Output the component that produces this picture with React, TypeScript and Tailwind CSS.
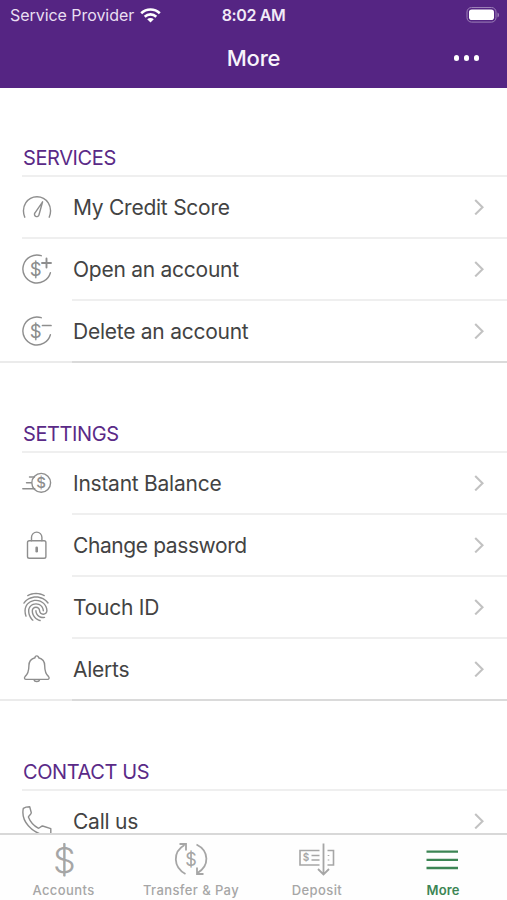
import type { ReactNode } from "react";
import { MdFingerprint } from "react-icons/md";

type Item = { label: string; icon: ReactNode; inset?: boolean; tracking?: string };
type Section = { title: string; items: Item[] };

function Dollar({ x, y, size, weight = 400 }: { x: number; y: number; size: number; weight?: number }) {
  return (
    <text x={x} y={y} fontSize={size} fontWeight={weight} textAnchor="middle" fill="currentColor" stroke="none">
      $
    </text>
  );
}

function Icon({ children }: { children: ReactNode }) {
  return (
    <svg
      className="h-[30px] w-[30px] shrink-0 text-[#8e8e8e]"
      viewBox="0 0 30 30"
      fill="none"
      stroke="currentColor"
      strokeWidth={1.4}
      strokeLinecap="round"
      strokeLinejoin="round"
    >
      {children}
    </svg>
  );
}

const GaugeIcon = (
  <Icon>
    <path d="M2.8 25.200C-1.500 14.500 5.500 4.700 15 4.700S31.500 14.500 27.200 25.200" />
    <path d="M20.600 9.800 13 20.800a2.300 2.300 0 1 0 4 2Z" />
  </Icon>
);

const OpenIcon = (
  <Icon>
    <path d="M19.200 1.700A14 14 0 1 0 28.400 18.700" />
    <path d="M24.500 4.500v9M20 9h9" strokeWidth={1.9} />
    <Dollar x={13.800} y={22} size={18.500} />
    <path d="M13.800 7.500v16.500" strokeWidth={1} />
  </Icon>
);

const DeleteIcon = (
  <Icon>
    <path d="M19.200 1.700A14 14 0 1 0 28.400 18.700" />
    <path d="M20.500 9.500h8.500" strokeWidth={1.700} />
    <Dollar x={13.800} y={22} size={18.500} />
    <path d="M13.800 7.500v16.500" strokeWidth={1} />
  </Icon>
);

const BalanceIcon = (
  <Icon>
    <circle cx="19.200" cy="14.800" r="9.400" />
    <Dollar x={19.200} y={20.200} size={15} weight={500} />
    <path d="M7.500 9h5M4.500 14.800h4.800M.8 20.800h12" />
  </Icon>
);

const LockIcon = (
  <Icon>
    <rect x="5.500" y="10.700" width="18.400" height="17.600" rx="1.800" />
    <path d="M9.500 10.700V7.300a5.200 5.200 0 0 1 10.400 0v3.400" />
    <path d="M14.700 17.700v3.600" strokeWidth={2.600} />
  </Icon>
);

const BellIcon = (
  <Icon>
    <path d="M13 3.700a1.800 1.800 0 0 1 3.600 0c4 1 6.100 3.800 6.100 8.100 0 6.500 1.200 8.600 3.900 10.800 1 1.100.4 2.800-1 2.800H4c-1.400 0-2-1.700-1-2.800 2.700-2.200 3.900-4.300 3.900-10.800 0-4.300 2.100-7.100 6.100-8.100Z" />
    <path d="M12 25.600c.5 2.600 5.100 2.600 5.600 0" />
  </Icon>
);

const PhoneIcon = (
  <Icon>
    <path d="M1.300 2.300C3 1.200 5.500.8 7.700.8L9.300 6.800C9.200 8.300 6.900 9.300 6.400 11c2 5.300 5.200 8.600 9.800 11.200 1.900-.1 2.700-2 4.400-2.200l8.200 2.700v5.500c-2 1-5 1.300-8 .4C11 26.500-1.500 16 1.300 2.300Z" />
  </Icon>
);

const TouchIcon = (
  <span className="flex size-[30px] shrink-0 items-center justify-center pr-0.5">
    <MdFingerprint className="size-[34px] shrink-0 text-[#8e8e8e]" />
  </span>
);

const SECTIONS: Section[] = [
  {
    title: "SERVICES",
    items: [
      { label: "My Credit Score", icon: GaugeIcon },
      { label: "Open an account", icon: OpenIcon, inset: true },
      { label: "Delete an account", icon: DeleteIcon },
    ],
  },
  {
    title: "SETTINGS",
    items: [
      { label: "Instant Balance", icon: BalanceIcon, inset: true },
      { label: "Change password", icon: LockIcon, inset: true, tracking: "tracking-[-0.4px]" },
      { label: "Touch ID", icon: TouchIcon, inset: true },
      { label: "Alerts", icon: BellIcon },
    ],
  },
  {
    title: "CONTACT US",
    items: [{ label: "Call us", icon: PhoneIcon }],
  },
];

function Chevron() {
  return (
    <svg className="mr-[22px] h-4 w-3" viewBox="0 0 12 16" fill="none" stroke="#c2c2c2" strokeWidth={2.1}>
      <path d="m2.200 1 7.300 7.200-7.300 7.200" />
    </svg>
  );
}

function Divider({ inset, last }: { inset?: boolean; last: boolean }) {
  if (last) {
    return (
      <div className="flex h-0.5">
        <div className="w-[72px] bg-[#ebebeb]" />
        <div className="flex-1 bg-[#dadada]" />
      </div>
    );
  }
  return <div className={`h-0.5 bg-[#efefef] ${inset ? "ml-[72px]" : "ml-[22px]"}`} />;
}

function MenuSection({ section, first }: { section: Section; first: boolean }) {
  return (
    <section>
      <div className={`flex items-end pb-1 pl-[23px] ${first ? "h-[87px]" : "h-[88px]"}`}>
        <h2 className="text-[20px] leading-[26px] tracking-[-0.4px] text-[#5a2a87]">{section.title}</h2>
      </div>
      <div className="ml-[22px] h-0.5 bg-[#efefef]" />
      {section.items.map((item, i) => (
        <div key={item.label}>
          <div className="flex h-[60px] items-center pl-[22px]">
            {item.icon}
            <span className={`ml-[21px] flex-1 pt-0.5 text-[21px] text-[#434343] ${item.tracking ?? "tracking-[-0.25px]"}`}>
              {item.label}
            </span>
            <Chevron />
          </div>
          <Divider inset={item.inset} last={i === section.items.length - 1} />
        </div>
      ))}
    </section>
  );
}

const TABS = [
  {
    label: "Accounts",
    width: "w-[127px]",
    icon: (
      <>
        <Dollar x={20.300} y={31.500} size={36} weight={300} />
        <path d="M20.300 2v33" strokeWidth={2} />
      </>
    ),
  },
  {
    label: "Transfer & Pay",
    width: "w-[128px]",
    icon: (
      <>
        <path
          d="M14.500 33C2 26 1.500 11 13.500 4M8.500 3h6.500v6.500M25.500 3.500C38.500 10 38.500 25 26.500 32M26 26.500V33h6.500"
          strokeWidth={1.8}
        />
        <Dollar x={20} y={24.500} size={18} />
        <path d="M20 10.500v15" strokeWidth={1.2} />
      </>
    ),
  },
  {
    label: "Deposit",
    width: "w-[124px]",
    icon: (
      <>
        <path d="M22.500 9.500H3v14.500h19.500M30.500 9.500h6v14.500h-6" strokeWidth={1.600} />
        <Dollar x={9} y={20.300} size={10} weight={600} />
        <path d="M14.500 14.500h8M14.500 19h8M31.500 14v1M31.500 18.500v1" strokeWidth={1.600} />
        <path d="M26.500 2.500v30.500M21 28l5.500 5.500 5.500-5.500" strokeWidth={1.800} />
      </>
    ),
  },
  {
    label: "More",
    width: "w-[128px]",
    icon: <path d="M3.500 10.700h31.500M3.500 18.900h31.500M3.500 27h31.500" strokeWidth={2.300} />,
    active: true,
  },
];

function TabBar() {
  return (
    <nav className="flex h-[67px] shrink-0 border-t-2 border-[#d8d8d8] bg-[#fefefe]">
      {TABS.map((tab) => (
        <div
          key={tab.label}
          className={`flex flex-col items-center pt-1.5 ${tab.width} ${tab.active ? "text-[#3c8554]" : "text-[#a6a6a6]"}`}
        >
          <svg className="h-9 w-10 overflow-visible" viewBox="0 0 40 36" fill="none" stroke="currentColor">
            {tab.icon}
          </svg>
          <span className={`mt-[5px] text-[13px] leading-4 ${tab.active ? "font-semibold tracking-[0.1px]" : "font-medium tracking-[0.4px]"}`}>
            {tab.label}
          </span>
        </div>
      ))}
    </nav>
  );
}

function Header() {
  return (
    <header className="h-[88px] shrink-0 bg-[#552583] text-white">
      <div className="grid h-[30px] grid-cols-3 items-center text-[16px]">
        <div className="flex items-center gap-1.5 pl-2.5 whitespace-nowrap text-[#e9dff2]">
          <span className="tracking-[-0.05px]">Service Provider</span>
          <svg className="h-[15px] w-[21px]" viewBox="0 0 21 15" fill="none" stroke="white" strokeWidth={2.600}>
            <path d="M1.200 5.200c5.300-5 13.300-5 18.600 0M4.700 8.700c3.400-3.100 8.200-3.100 11.600 0" />
            <path d="M7.200 11.300c1.900-1.700 4.700-1.700 6.600 0L10.500 14.600Z" fill="white" stroke="none" />
          </svg>
        </div>
        <span className="text-center font-semibold tracking-[-0.4px] text-[#f1eaf7]">8:02 AM</span>
        <svg className="mr-[7px] h-4 w-[34px] justify-self-end" viewBox="0 0 34 16">
          <rect x="1" y=".5" width="29" height="14.600" rx="4.500" fill="none" stroke="#9d80b8" />
          <rect x="3" y="2.500" width="25" height="10.600" rx="2.800" fill="white" />
          <path d="M31.500 5.500c2 .8 2 4.200 0 5Z" fill="#9d80b8" />
        </svg>
      </div>
      <div className="grid h-[56px] grid-cols-3 items-center">
        <h1 className="col-start-2 text-center text-[22px] font-medium tracking-[-0.2px] text-[#f8f4fb]">More</h1>
        <div className="mr-7 flex gap-[4.5px] justify-self-end">
          <span className="size-[5.5px] rounded-full bg-white" />
          <span className="size-[5.5px] rounded-full bg-white" />
          <span className="size-[5.5px] rounded-full bg-white" />
        </div>
      </div>
    </header>
  );
}

export default function App() {
  return (
    <div className="flex h-[900px] w-[507px] flex-col overflow-hidden bg-white font-['Inter',sans-serif]">
      <Header />
      <main className="min-h-0 flex-1 overflow-hidden">
        {SECTIONS.map((section, i) => (
          <MenuSection key={section.title} section={section} first={i === 0} />
        ))}
      </main>
      <TabBar />
    </div>
  );
}
